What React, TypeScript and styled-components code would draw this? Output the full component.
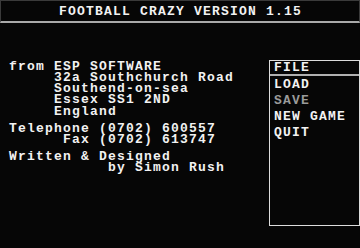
import React from "react";
import styled, { createGlobalStyle } from "styled-components";

const Global = createGlobalStyle`
  html, body { margin: 0; padding: 0; background: #060606; }
  body { width: 360px; height: 248px; overflow: hidden; }
`;

const Screen = styled.div`
  width: 360px;
  height: 248px;
  background: #060606;
  color: #f2f2f2;
  font-family: "Liberation Mono", "DejaVu Sans Mono", monospace;
  font-weight: bold;
  font-size: 13px;
  letter-spacing: 1.2px;
  display: flex;
  flex-direction: column;
`;

const TitleBar = styled.div`
  box-sizing: border-box;
  height: 23px;
  border: 1px solid #3a3a3a;
  border-bottom: 2px solid #a9a9a9;
  display: flex;
  align-items: center;
  justify-content: center;
  line-height: 20px;
  padding: 1px 0 0 1px;
`;

const Main = styled.div`
  flex: 1;
  display: flex;
  align-items: flex-start;
`;

const Info = styled.div`
  flex: 1;
  padding: 37.5px 0 0 9px;
  display: flex;
  flex-direction: column;
  gap: 5.8px;
`;

const Group = styled.div`
  display: flex;
  flex-direction: column;
`;

const Line = styled.div`
  white-space: pre;
  line-height: 11.3px;
  height: 11.3px;
`;

const Menu = styled.div`
  box-sizing: border-box;
  margin-top: 37px;
  width: 91px;
  height: 166px;
  border: 1px solid #dcdcdc;
  display: flex;
  flex-direction: column;
`;

const MenuHeader = styled.div`
  height: 13px;
  line-height: 13px;
  padding-left: 4px;
  border-bottom: 2px solid #b0b0b0;
`;

const MenuList = styled.div`
  padding-top: 1px;
  display: flex;
  flex-direction: column;
`;

const MenuItem = styled.div<{ $disabled?: boolean }>`
  height: 16px;
  line-height: 16px;
  padding-left: 4px;
  white-space: pre;
  color: ${(p) => (p.$disabled ? "#9a9a9a" : "#f2f2f2")};
`;

export default function App() {
  return (
    <>
      <Global />
      <Screen>
        <TitleBar>FOOTBALL CRAZY VERSION 1.15</TitleBar>
        <Main>
          <Info>
            <Group>
              <Line>from ESP SOFTWARE</Line>
              <Line>{"     32a Southchurch Road"}</Line>
              <Line>{"     Southend-on-sea"}</Line>
              <Line>{"     Essex SS1 2ND"}</Line>
              <Line>{"     England"}</Line>
            </Group>
            <Group>
              <Line>Telephone (0702) 600557</Line>
              <Line>{"      Fax (0702) 613747"}</Line>
            </Group>
            <Group>
              <Line>Written &amp; Designed</Line>
              <Line>{"           by Simon Rush"}</Line>
            </Group>
          </Info>
          <Menu>
            <MenuHeader>FILE</MenuHeader>
            <MenuList>
              <MenuItem>LOAD</MenuItem>
              <MenuItem $disabled>SAVE</MenuItem>
              <MenuItem>NEW GAME</MenuItem>
              <MenuItem>QUIT</MenuItem>
            </MenuList>
          </Menu>
        </Main>
      </Screen>
    </>
  );
}
